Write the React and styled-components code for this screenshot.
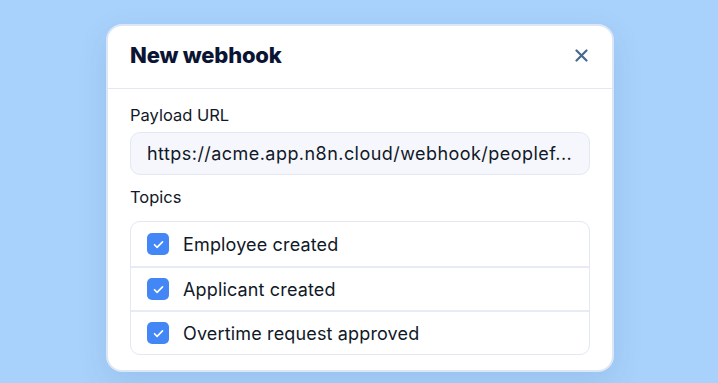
import React from "react";
import styled, { createGlobalStyle } from "styled-components";

const GlobalStyle = createGlobalStyle`
  html, body {
    margin: 0;
    padding: 0;
    height: 100%;
  }
  body {
    background: #a8d1fb;
    font-family: "Inter", "Noto Sans", sans-serif;
    overflow: hidden;
  }
`;

const topics = [
  "Employee created",
  "Applicant created",
  "Overtime request approved",
];

const Stage = styled.div`
  height: 383px;
  display: flex;
  justify-content: center;
  padding-top: 24px;
  box-sizing: border-box;
  padding-left: 2px;
`;

const Card = styled.div`
  width: 508px;
  height: 348px;
  box-sizing: border-box;
  background: #fff;
  border: 2px solid #dde6f6;
  border-radius: 16px;
  box-shadow: 0 10px 30px rgba(40, 80, 140, 0.12);
  display: flex;
  flex-direction: column;
`;

const Header = styled.div`
  height: 63px;
  box-sizing: border-box;
  display: flex;
  align-items: center;
  justify-content: space-between;
  padding: 0 21px 4px 22px;
  border-bottom: 1px solid #e4e8f3;
`;

const Title = styled.h2`
  margin: 0;
  font-size: 22px;
  font-weight: 800;
  color: #0b1533;
  letter-spacing: -0.2px;
`;

const CloseButton = styled.button`
  border: none;
  background: none;
  padding: 0;
  width: 20px;
  height: 20px;
  display: flex;
  align-items: center;
  justify-content: center;
  color: #48698f;
  cursor: pointer;
`;

const Body = styled.div`
  padding: 14px 22px 0 22px;
  display: flex;
  flex-direction: column;
`;

const Label = styled.div`
  font-size: 16.5px;
  color: #111827;
  line-height: 24px;
  margin-bottom: ${(p) => p.gap}px;
`;

const UrlField = styled.div`
  height: 43px;
  box-sizing: border-box;
  background: #f5f7fd;
  border: 1px solid #e3e8f4;
  border-radius: 10px;
  padding: 0 16px;
  display: flex;
  align-items: center;
  font-size: 18px;
  letter-spacing: 0.45px;
  color: #111827;
  white-space: nowrap;
  overflow: hidden;
  margin-bottom: 10px;
`;

const TopicList = styled.div`
  border: 1px solid #e3e8f4;
  border-radius: 10px;
  overflow: hidden;
`;

const TopicRow = styled.label`
  height: 44px;
  display: flex;
  align-items: center;
  gap: 14px;
  padding: 0 16px;
  font-size: 18px;
  letter-spacing: 0.15px;
  color: #111827;
  border-top: ${(p) => (p.first ? "none" : "2px solid #e6ebf6")};
  box-sizing: border-box;
`;

const Box = styled.span`
  width: 22px;
  height: 22px;
  border-radius: 5px;
  background: #4287f5;
  display: flex;
  align-items: center;
  justify-content: center;
  flex-shrink: 0;
`;

const Check = () => (
  <svg width="13" height="13" viewBox="0 0 12 12" fill="none">
    <path d="M2.3 6.2l2.4 2.4 5-5" stroke="#fff" strokeWidth="1.5" strokeLinecap="round" strokeLinejoin="round" />
  </svg>
);

const CloseIcon = () => (
  <svg width="13" height="13" viewBox="0 0 13 13" fill="none">
    <path d="M1.5 1.5l10 10M11.5 1.5l-10 10" stroke="currentColor" strokeWidth="2.2" strokeLinecap="round" />
  </svg>
);

export default function App() {
  return (
    <>
      <GlobalStyle />
      <Stage>
        <Card>
          <Header>
            <Title>New webhook</Title>
            <CloseButton aria-label="Close">
              <CloseIcon />
            </CloseButton>
          </Header>
          <Body>
            <Label gap={5}>Payload URL</Label>
            <UrlField>https://acme.app.n8n.cloud/webhook/peoplef...</UrlField>
            <Label gap={12}>Topics</Label>
            <TopicList>
              {topics.map((t, i) => (
                <TopicRow key={t} first={i === 0}>
                  <Box>
                    <Check />
                  </Box>
                  {t}
                </TopicRow>
              ))}
            </TopicList>
          </Body>
        </Card>
      </Stage>
    </>
  );
}
